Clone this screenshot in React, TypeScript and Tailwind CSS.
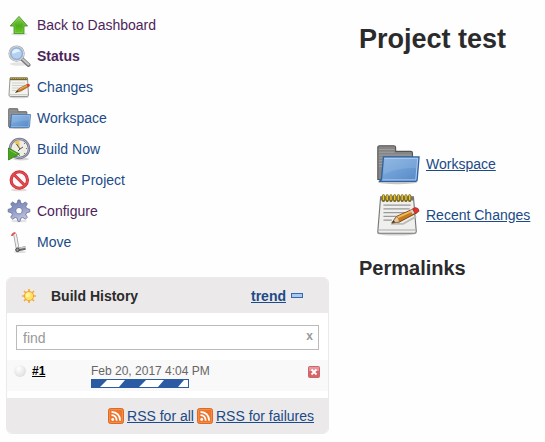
import type { ReactNode } from "react";

function UpArrow() {
  return (
    <svg viewBox="0 0 24 24" className="size-6 shrink-0" aria-hidden="true">
      <defs>
        <linearGradient id="up" x1="0" y1="0" x2="0" y2="1">
          <stop offset="0" stopColor="#8bd35c" />
          <stop offset=".55" stopColor="#4eac1c" />
          <stop offset="1" stopColor="#69ca20" />
        </linearGradient>
      </defs>
      <ellipse cx="12" cy="21" rx="8" ry="1.5" fill="#ddd" />
      <path d="M12 3.4 20.5 13H17v7.500H7V13H3.200Z" fill="url(#up)" stroke="#3c8c1c" strokeWidth=".8" />
      <path d="M12 5 18.500 12.200H16v7.500H8V12.200H5.200Z" fill="none" stroke="#a4e17c" strokeOpacity=".5" strokeWidth=".7" />
    </svg>
  );
}

function Magnifier() {
  return (
    <svg viewBox="0 0 24 24" className="size-6 shrink-0" aria-hidden="true">
      <ellipse cx="12" cy="20" rx="9" ry="1.8" fill="#e4e4e4" />
      <path d="m15 15 6.500 6" stroke="#777" strokeWidth="4" strokeLinecap="round" />
      <path d="m15.500 15 6 5.500" stroke="#c4c4c4" strokeWidth="2" strokeLinecap="round" />
      <circle cx="9.600" cy="9.600" r="7.200" fill="#bfd8f4" stroke="#a0a4aa" strokeWidth="1.900" />
      <circle cx="9.600" cy="9.600" r="7" fill="none" stroke="#e4e8ef" strokeWidth=".9" />
      <circle cx="9.600" cy="9.600" r="5.700" fill="#b3d0f1" stroke="#7298cc" strokeWidth=".8" />
      <path d="M5 9.500c0-3 2-4.500 4.500-4.500 2 0 3.500 1 4 2.500C10 7.500 8 10 5 9.500Z" fill="#e5f1fd" />
    </svg>
  );
}

function SmallNotepad() {
  return (
    <svg viewBox="0 0 24 24" className="size-6 shrink-0" aria-hidden="true">
      <ellipse cx="12" cy="22" rx="10" ry="1.300" fill="#d5d5d5" />
      <path d="M3 3h17.500l1 17q0 1.500-1.500 1.500H3.500Q2 21.500 2 20Z" fill="#f3f3f0" stroke="#8b8b8b" strokeWidth=".9" />
      <path d="M3 2.500h17.500v2.700H3Z" fill="#75682f" />
      <path d="M3.500 3.500h16.500" stroke="#b8a450" strokeWidth="1.200" strokeDasharray="1.500 .7" />
      <path d="M5 8h13M5 10.500h13M5 13h7M5 15.500h5" stroke="#c6c6c6" strokeWidth=".8" />
      <path d="M2.500 19.700h18.500" stroke="#bbb" strokeWidth=".8" />
      <path d="m8.500 17.500 3.500-4 8-4q1.500 0 2 1.800L14 16Z" fill="#cf8226" stroke="#7a4917" strokeWidth=".6" />
      <path d="m12.500 14 7.500-3.500" stroke="#f0bb65" strokeWidth=".9" />
      <path d="m8.500 17.500 2-2.300 1 1.300Z" fill="#333" />
      <path d="m19.500 9.500 1.600-.7q1.900.2 1.900 2l-2 1.200Z" fill="#df3e39" />
    </svg>
  );
}

function Notepad({ className }: { className: string }) {
  return (
    <svg viewBox="0 0 48 48" className={className} aria-hidden="true">
      <ellipse cx="23" cy="44" rx="21" ry="2.500" fill="#cfcfcf" />
      <path d="M6 5h35l3 37q0 2-2 2H5q-2 0-2-2Z" fill="#efefed" stroke="#777" strokeWidth="1.200" />
      <path d="M6 5h35l.5 4h-36Z" fill="#777" />
      <path d="M4 40.500h39" stroke="#aaa" strokeWidth="1.200" />
      <path d="M9 14h29M9 18h28M9 22h29M9 26h14M9 30h9" stroke="#999" strokeWidth="1.200" />
      <path d="M9 4v5M13 4v5M17 4v5M21 4v5M25 4v5M29 4v5M33 4v5M37 4v5" stroke="#7a6516" strokeWidth="3.200" strokeLinecap="round" />
      <path d="M9 4v4M13 4v4M17 4v4M21 4v4M25 4v4M29 4v4M33 4v4M37 4v4" stroke="#e5c630" strokeWidth="1.600" strokeLinecap="round" />
      <path d="m17 34 13 0 14-8" fill="none" stroke="#bbb" strokeWidth="2" />
      <path d="m18 33 5-7 18-8q3 0 4 4L26 32Z" fill="#c87b1d" stroke="#75410d" strokeWidth="1" />
      <path d="m24 27 16-7" stroke="#f1bc61" strokeWidth="2" />
      <path d="m18 33 5-7q3 2 3 6Z" fill="#e8c99a" stroke="#8a5b2a" strokeWidth=".6" />
      <path d="m18 33 2-3 1.500 2.300Z" fill="#333" />
      <path d="m39 19 2 4" stroke="#ccd5da" strokeWidth="2.500" />
      <path d="m40 18 3-1.500q4 .5 4 4l-4 2.500Z" fill="#e0332f" stroke="#a52520" strokeWidth=".7" />
    </svg>
  );
}

function Folder({ className }: { className: string }) {
  return (
    <svg viewBox="0 0 48 48" className={className} aria-hidden="true">
      <defs>
        <linearGradient id="folder" x1="0" y1="0" x2="1" y2="1">
          <stop offset="0" stopColor="#8db6e3" />
          <stop offset=".5" stopColor="#6f9fd6" />
          <stop offset="1" stopColor="#5588c5" />
        </linearGradient>
      </defs>
      <ellipse cx="24" cy="44" rx="21" ry="2" fill="#c5c5c5" />
      <path d="M3 41V7q0-2 2-2h15q2 0 2 2v4h16q2 0 2 2v28Z" fill="#858585" stroke="#555" strokeWidth="1.200" />
      <path d="M4 9h17M4 12h17M4 15h35M4 18h35M4 21h6M4 24h6M4 27h6" stroke="#a0a0a0" strokeWidth="1" />
      <path d="M9 17h38l-2 24q0 2-2 2H4q2 0 3-3Z" fill="url(#folder)" stroke="#2f62a2" strokeWidth="1.400" />
      <path d="M10 18.500h35.500l-2 23H8" fill="none" stroke="#b6d0ee" strokeWidth="1" />
      <path d="M10 19h35l-1 10q-20-1-35 7Z" fill="#a8c8ea" fillOpacity=".25" />
    </svg>
  );
}

function BuildClock() {
  return (
    <svg viewBox="0 0 24 24" className="size-6 shrink-0" aria-hidden="true">
      <ellipse cx="14" cy="22" rx="8" ry="1.500" fill="#d5d5d5" />
      <circle cx="12.500" cy="11.500" r="9.500" fill="#eeeee5" stroke="#74748c" strokeWidth="2.400" />
      <circle cx="12.500" cy="11.500" r="9.500" fill="none" stroke="#b1b1c8" strokeWidth=".9" />
      <path d="M12.500 11.500 7 5q2.500-2 5.500-1.500Z" fill="#edc65b" />
      <path d="m9.500 7 3.500 5 3-2M11 14l2-2" fill="none" stroke="#555" strokeWidth="1" />
      <path d="M12.500 18v1M19 11.500h1M17 7l1-1M17 16l1 1" stroke="#777" />
      <path d="M1.500 11v12L12.500 17Z" fill="#49a51b" stroke="#2f7b15" strokeWidth=".8" />
      <path d="m2.500 13 7 4" stroke="#8bd35c" strokeWidth=".8" />
    </svg>
  );
}

function NoEntry() {
  return (
    <svg viewBox="0 0 24 24" className="size-6 shrink-0" aria-hidden="true">
      <ellipse cx="12" cy="22" rx="8" ry="1.300" fill="#ddd" />
      <circle cx="12.300" cy="12" r="8.200" fill="#fafafa" stroke="#c5282f" strokeWidth="3" />
      <path d="m6.800 6.500 11 11" stroke="#c5282f" strokeWidth="3" />
      <circle cx="12.300" cy="12" r="8.200" fill="none" stroke="#e34a50" strokeWidth="1.800" />
      <path d="m6.800 6.500 11 11" stroke="#e34a50" strokeWidth="1.800" />
    </svg>
  );
}

function Gear() {
  return (
    <svg viewBox="0 0 24 24" className="size-6 shrink-0" aria-hidden="true">
      <defs>
        <linearGradient id="gear" x1="0" y1="0" x2=".4" y2="1">
          <stop offset="0" stopColor="#6c7fae" />
          <stop offset=".5" stopColor="#8c98c4" />
          <stop offset="1" stopColor="#c0c3df" />
        </linearGradient>
      </defs>
      <ellipse cx="12" cy="22" rx="8" ry="1.300" fill="#e2e2e2" />
      <path
        fillRule="evenodd"
        d="m10.300 4 .7-3h2l.7 3 2 .8 2.800-1.800 1.800 1.800-1.500 2.700.8 2 3.200.8v2.600l-3.200.8-.8 2 1.500 2.600-1.800 1.900-2.800-1.700-2 .9-.7 3h-2l-.7-3-2-.9-2.700 1.700-1.900-1.900 1.600-2.600-.9-2-3.200-.8v-2.600l3.200-.8.9-2-1.600-2.700 1.900-1.800 2.700 1.800ZM12 8.500a3.200 3.200 0 1 0 .01 0Z"
        fill="url(#gear)"
        stroke="#667197"
        strokeWidth=".8"
      />
    </svg>
  );
}

function HandTruck() {
  return (
    <svg viewBox="0 0 24 24" className="size-6 shrink-0" aria-hidden="true">
      <ellipse cx="13" cy="22" rx="6" ry="1" fill="#ddd" />
      <path d="m8 4 2.500 14" stroke="#9a9a9a" strokeWidth="3.600" />
      <path d="m8 4 2.500 14" stroke="#efefef" strokeWidth="2" />
      <path d="M5 6q0-2.500 3.500-3.200" fill="none" stroke="#df5550" strokeWidth="1.800" />
      <path d="m11 19.500 7.500-1.500" stroke="#666" strokeWidth="3.600" />
      <path d="m11 18.500 8-1.500" stroke="#ccc" strokeWidth="1.400" />
      <circle cx="10.500" cy="19.800" r="1.800" fill="#999" stroke="#444" />
    </svg>
  );
}

function Sun() {
  return (
    <svg viewBox="0 0 16 16" className="size-4 shrink-0" aria-hidden="true">
      <path
        d="M8 1v14M1 8h14M3 3l10 10M13 3 3 13"
        stroke="#f2a93c"
        strokeWidth="1.600"
      />
      <circle cx="8" cy="8" r="4.600" fill="#ffe262" stroke="#f0a433" strokeWidth="1" />
      <circle cx="7" cy="7" r="2.300" fill="#fff5a0" />
    </svg>
  );
}

function Rss() {
  return (
    <svg viewBox="0 0 16 16" className="size-4 shrink-0" aria-hidden="true">
      <rect x=".5" y=".5" width="15" height="15" rx="2" fill="#ed762f" stroke="#dd6a22" />
      <rect x="1.500" y="1.500" width="13" height="13" rx="1" fill="none" stroke="#f39a55" strokeWidth=".7" />
      <circle cx="4.700" cy="11.500" r="1.400" fill="#fff" />
      <path d="M3.500 7.200q5 .2 5.200 5.500M3.500 3.800q8.300.4 8.700 8.900" fill="none" stroke="#fff" strokeWidth="1.700" />
    </svg>
  );
}

function Progress() {
  return (
    <svg viewBox="0 0 98 9" className="block h-[9px] w-[98px]" role="img" aria-label="Build in progress">
      <rect width="98" height="9" fill="#2b5ca3" />
      <path d="M16 1h18l-6 7H9ZM55 1h18l-6 7H48ZM93 1h4v7H87Z" fill="#fff" />
    </svg>
  );
}

const tasks: { label: string; icon: ReactNode; tone: string }[] = [
  { label: "Back to Dashboard", icon: <UpArrow />, tone: "text-[#4d2459]" },
  { label: "Status", icon: <Magnifier />, tone: "font-bold text-[#4d2459]" },
  { label: "Changes", icon: <SmallNotepad />, tone: "text-[#204a87]" },
  { label: "Workspace", icon: <Folder className="size-6 shrink-0" />, tone: "text-[#204a87]" },
  { label: "Build Now", icon: <BuildClock />, tone: "text-[#204a87]" },
  { label: "Delete Project", icon: <NoEntry />, tone: "text-[#204a87]" },
  { label: "Configure", icon: <Gear />, tone: "text-[#4d2459]" },
  { label: "Move", icon: <HandTruck />, tone: "text-[#204a87]" },
];

function BuildHistory() {
  return (
    <section className="ml-[6px] mt-5 overflow-hidden rounded-md border border-[#ebe9e9] bg-white">
      <header className="flex h-[35px] items-center bg-[#ebe9e9] pl-[14px] pr-[25px]">
        <Sun />
        <h2 className="ml-[14px] text-sm font-bold text-[#2b2b2b]">Build History</h2>
        <a href="#trend" className="ml-auto text-sm font-bold text-[#204a87] underline">trend</a>
        <button type="button" aria-label="Collapse" className="ml-[5px] h-[5px] w-3 border border-[#3569ad] bg-[#a9cbed]" />
      </header>
      <div className="pb-[7px] pt-3">
        <div className="mx-[9px] flex h-[25px] items-center border border-[#bbb]">
          <input type="text" placeholder="find" aria-label="Find build" className="min-w-0 flex-1 px-[6px] text-sm text-[#333] outline-none placeholder:text-[#999]" />
          <button type="button" aria-label="Clear" className="px-[5px] pb-1 text-xs font-bold text-[#999]">x</button>
        </div>
        <table className="mt-[10px] w-full bg-[#f9f9f9] text-xs">
          <tbody>
            <tr className="h-[31px] align-top">
              <td className="w-[84px] pl-[7px] pt-[3px]">
                <div className="flex items-center gap-[6px]">
                  <span className="size-3 rounded-full bg-radial-[at_40%_30%] from-white to-[#d5d5d5]" />
                  <a href="#1" className="font-bold text-black underline">#1</a>
                </div>
              </td>
              <td className="pt-[3px] text-[#666]">
                <div className="leading-4">Feb 20, 2017 4:04 PM</div>
                <Progress />
              </td>
              <td className="w-5 pr-2 pt-[6px]">
                <button type="button" aria-label="Cancel build" className="block size-3">
                  <svg viewBox="0 0 12 12" className="size-3" aria-hidden="true">
                    <rect x=".5" y=".5" width="11" height="11" rx="1" fill="#dc6268" stroke="#c36a6e" />
                    <path d="M1 1h10v4H1Z" fill="#e99498" />
                    <path d="m3.500 3.500 5 5m0-5-5 5" stroke="#fff" strokeWidth="1.800" />
                  </svg>
                </button>
              </td>
            </tr>
          </tbody>
        </table>
      </div>
      <footer className="flex h-[35px] items-center justify-end gap-[3px] bg-[#ebe9e9] pr-[14px] text-sm text-[#204a87]">
        <Rss />
        <a href="#rss-all" className="underline">RSS for all</a>
        <Rss />
        <a href="#rss-failures" className="underline">RSS for failures</a>
      </footer>
    </section>
  );
}

export default function App() {
  return (
    <div className="flex min-h-screen bg-[#fefefe] font-['Liberation_Sans',Arial,sans-serif]">
      <aside className="w-[329px] shrink-0 pb-2 pt-[9px]">
        <nav>
          <ul>
            {tasks.map((task) => (
              <li key={task.label} className="h-[31px] pl-[7px]">
                <a href="#task" className={`flex h-full items-center gap-[6px] text-sm ${task.tone}`}>
                  {task.icon}
                  {task.label}
                </a>
              </li>
            ))}
          </ul>
        </nav>
        <BuildHistory />
      </aside>
      <main className="min-w-0 flex-1 pl-[30px] pt-[21px] text-[#2b2b2b]">
        <h1 className="text-[27px] font-bold leading-9">Project test</h1>
        <ul className="ml-4 mt-[81px] text-sm text-[#204a87]">
          <li className="flex h-[51px] items-center gap-[6px]">
            <Folder className="size-[45px] shrink-0" />
            <a href="#workspace" className="underline">Workspace</a>
          </li>
          <li className="flex h-[51px] items-center gap-[6px]">
            <Notepad className="size-[45px] shrink-0" />
            <a href="#changes" className="underline">Recent Changes</a>
          </li>
        </ul>
        <h2 className="mt-[14px] text-xl font-bold">Permalinks</h2>
      </main>
    </div>
  );
}
